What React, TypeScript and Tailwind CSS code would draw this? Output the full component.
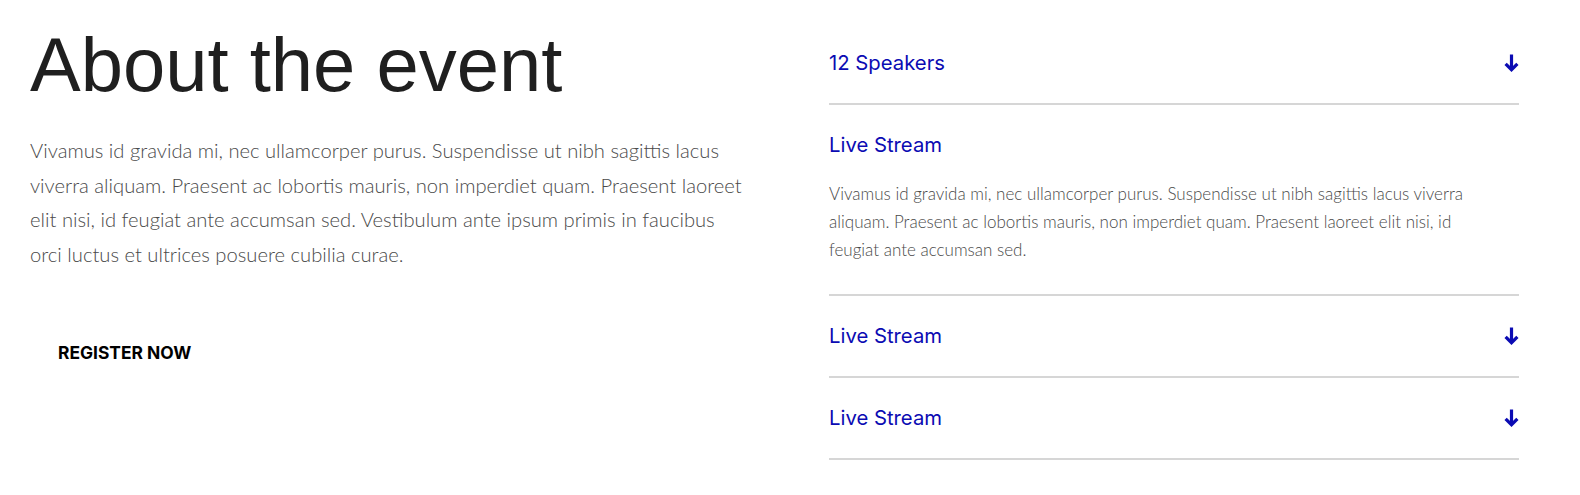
import React, { useState } from 'react';

const items = [
  { title: '12 Speakers', body: '' },
  {
    title: 'Live Stream',
    body: 'Vivamus id gravida mi, nec ullamcorper purus. Suspendisse ut nibh sagittis lacus viverra aliquam. Praesent ac lobortis mauris, non imperdiet quam. Praesent laoreet elit nisi, id feugiat ante accumsan sed.',
  },
  { title: 'Live Stream', body: '' },
  { title: 'Live Stream', body: '' },
];

const Arrow = () => (
  <svg width="15" height="18" viewBox="0 0 15 18" fill="none" stroke="currentColor" strokeWidth="3.2">
    <path d="M7.5 0.5V15.5" />
    <path d="M1.6 9.8L7.5 15.7L13.4 9.8" />
  </svg>
);

const App: React.FC = () => {
  const [open, setOpen] = useState(1);

  return (
    <div className="w-[1580px] h-[495px] bg-white flex">
      <div className="w-[718px] ml-[30px] pt-[27px]">
        <h1 className="text-[76px] leading-[75px] text-[#1f1f1f] font-['Liberation_Sans',Arial,sans-serif]">
          About the event
        </h1>
        <p className="mt-[31px] text-[20.2px] leading-[34.6px] font-light text-[#4a4a4a] font-['Lato',sans-serif]">
          Vivamus id gravida mi, nec ullamcorper purus. Suspendisse ut nibh sagittis lacus viverra aliquam. Praesent ac
          lobortis mauris, non imperdiet quam. Praesent laoreet elit nisi, id feugiat ante accumsan sed. Vestibulum ante
          ipsum primis in faucibus orci luctus et ultrices posuere cubilia curae.
        </p>
        <button className="mt-[58px] px-[28px] py-[12px] text-[17.4px] leading-[24px] font-bold text-black uppercase font-['Inter',sans-serif]">
          Register Now
        </button>
      </div>

      <div className="w-[690px] ml-[81px] pt-[23px] font-['Inter',sans-serif]">
        {items.map((item, i) => {
          const isOpen = open === i && item.body;
          return (
            <div key={i} className="border-b-2 border-[#d6d6d6]">
              <button
                onClick={() => setOpen(open === i ? -1 : i)}
                className={`w-full flex items-center justify-between text-left text-[20.3px] leading-[24px] text-[#0b0bb3] ${
                  isOpen ? 'pt-[28px] pb-0' : 'py-[28px]'
                }`}
              >
                <span>{item.title}</span>
                {!isOpen && (
                  <span className="text-[#0b0bb3]">
                    <Arrow />
                  </span>
                )}
              </button>
              {isOpen && (
                <p className="mt-[23px] pb-[30px] pr-[45px] text-[17px] leading-[28px] font-light text-[#4a4a4a] font-['Lato',sans-serif]">
                  {item.body}
                </p>
              )}
            </div>
          );
        })}
      </div>
    </div>
  );
};

export default App;
